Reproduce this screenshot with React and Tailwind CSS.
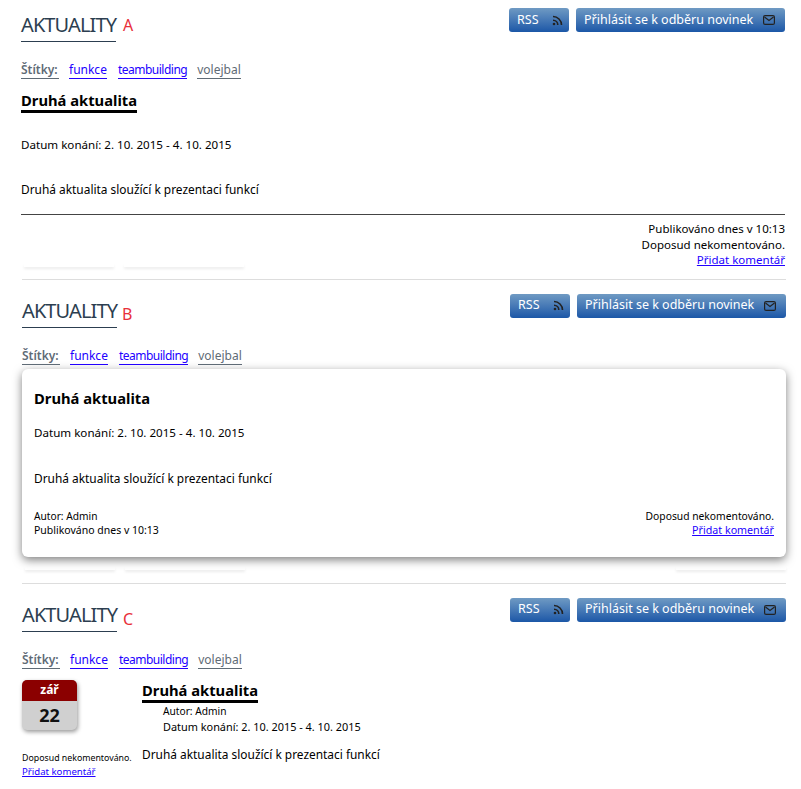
const FONT = "font-['Noto_Sans','DejaVu_Sans',sans-serif]"

function RssIcon() {
  return (
    <svg width="11" height="11" viewBox="0 0 11 11" fill="none" stroke="#222" strokeWidth="1.6" className="shrink-0">
      <circle cx="2" cy="9" r="1.3" fill="#222" stroke="none" />
      <path d="M1 5.2a4.8 4.8 0 0 1 4.8 4.8" />
      <path d="M1 1.5a8.5 8.5 0 0 1 8.5 8.5" />
    </svg>
  )
}

function MailIcon() {
  return (
    <svg width="12" height="10" viewBox="0 0 12 10" fill="none" stroke="#222" strokeWidth="1.2" className="shrink-0">
      <rect x="0.6" y="0.6" width="10.8" height="8.8" rx="1.5" />
      <path d="M1.5 2l4.5 3.5L10.5 2" />
    </svg>
  )
}

function Header({ letter, letterClass }) {
  return (
    <div className="flex items-start justify-between">
      <div className="flex items-start">
        <h2 className="h-[34px] w-[95px] border-b border-[#2c3e50] pt-[3px] text-[20px] leading-[27px] tracking-[-0.9px] whitespace-nowrap text-[#2c3e50]">
          AKTUALITY
        </h2>
        <span className={`text-[16px] leading-none text-[#e8303a] ${letterClass}`}>{letter}</span>
      </div>
      <div className="flex gap-[7px]">
        <button type="button" className="flex h-[24px] w-[60px] items-center justify-between rounded-[3px] bg-gradient-to-b from-[#6f9ac3] to-[#1b57a7] pr-[6px] pl-[8px] text-[12.5px] text-white">
          RSS <RssIcon />
        </button>
        <button type="button" className="flex h-[24px] w-[209px] items-center justify-between rounded-[3px] bg-gradient-to-b from-[#6f9ac3] to-[#1b57a7] pr-[10px] pl-[8px] text-[12.5px] whitespace-nowrap text-white">
          Přihlásit se k odběru novinek <MailIcon />
        </button>
      </div>
    </div>
  )
}

function Tags() {
  return (
    <div className="mt-[20px] flex h-[17px] items-center text-[12px] leading-[16px]">
      <span className="w-[38px] border-b border-[#5f6b76] font-semibold whitespace-nowrap text-[#5f6b76]">Štítky:</span>
      <a href="#" className="ml-[10px] border-b border-[#2200ff] text-[#2200ff]">funkce</a>
      <a href="#" className="ml-[11px] border-b border-[#2200ff] tracking-[-0.5px] text-[#2200ff]">teambuilding</a>
      <a href="#" className="ml-[10px] border-b border-[#5f6b76] text-[#5f6b76]">volejbal</a>
    </div>
  )
}

function Ghosts({ right }) {
  return (
    <div className="flex h-[3px] pl-[3px]">
      <div className="h-full w-[90px] shadow-[0_2px_3px_rgba(0,0,0,0.08)]" />
      <div className="ml-[10px] h-full w-[120px] shadow-[0_2px_3px_rgba(0,0,0,0.08)]" />
      {right && <div className="ml-auto h-full w-[110px] shadow-[0_2px_3px_rgba(0,0,0,0.08)]" />}
    </div>
  )
}

function A() {
  return (
    <section className="pl-[21px] pr-[16px] pt-[8px]">
      <Header letter="A" letterClass="mt-[9px] ml-[7px]" />
      <Tags />
      <h3 className="mt-[12px] w-fit border-b-[3px] border-black text-[14.75px] leading-[19px] font-bold text-black">Druhá aktualita</h3>
      <p className="mt-[24px] text-[11.6px] leading-[16px]">Datum konání: 2. 10. 2015 - 4. 10. 2015</p>
      <p className="mt-[28px] text-[11.9px] leading-[16px]">Druhá aktualita sloužící k prezentaci funkcí</p>
      <div className="mt-[17px] border-t border-[#444]" />
      <div className="mt-[6px] flex flex-col items-end text-[11.5px] leading-[15.5px]">
        <span>Publikováno dnes v 10:13</span>
        <span>Doposud nekomentováno.</span>
        <a href="#" className="text-[#2200ff] underline">Přidat komentář</a>
      </div>
      <div className="-mt-[4px]"><Ghosts /></div>
    </section>
  )
}

function B() {
  return (
    <section className="mt-[12px] pl-[22px] pr-[15px]">
      <div className="border-t border-[#ddd] pt-[14px]">
        <Header letter="B" letterClass="mt-[12px] ml-[5px]" />
        <Tags />
        <div className="mt-[4px] h-[188px] rounded-[6px] bg-white px-[12px] pt-[20px] shadow-[0_3px_10px_rgba(0,0,0,0.5)]">
          <h3 className="text-[14.75px] leading-[19px] font-bold">Druhá aktualita</h3>
          <p className="mt-[17px] text-[11.6px] leading-[16px]">Datum konání: 2. 10. 2015 - 4. 10. 2015</p>
          <p className="mt-[29px] text-[11.9px] leading-[16px]">Druhá aktualita sloužící k prezentaci funkcí</p>
          <div className="mt-[23px] flex justify-between text-[10.5px] leading-[14px]">
            <div>
              <div className="text-[10.2px]">Autor: Admin</div>
              <div>Publikováno dnes v 10:13</div>
            </div>
            <div className="flex flex-col items-end">
              <span className="text-[10.3px]">Doposud nekomentováno.</span>
              <a href="#" className="text-[10.7px] text-[#2200ff] underline">Přidat komentář</a>
            </div>
          </div>
        </div>
        <div className="mt-[10px]"><Ghosts right /></div>
      </div>
    </section>
  )
}

function C() {
  return (
    <section className="mt-[13px] pl-[22px] pr-[15px]">
      <div className="border-t border-[#ddd] pt-[14px]">
        <Header letter="C" letterClass="mt-[13px] ml-[6px]" />
        <Tags />
        <div className="mt-[11px] flex">
          <div className="w-[120px] shrink-0">
            <div className="h-[50px] w-[55px] overflow-hidden rounded-[5px] bg-[#d0d0d0] text-center shadow-[1px_2px_4px_rgba(0,0,0,0.4)]">
              <div className="h-[21px] bg-[#8b0000] text-[12px] leading-[20px] font-bold text-white">zář</div>
              <div className="text-[18px] leading-[29px] font-bold text-[#111]">22</div>
            </div>
            <div className="mt-[21px] text-[8.8px] leading-[14px] whitespace-nowrap">
              <div>Doposud nekomentováno.</div>
              <a href="#" className="text-[9.6px] text-[#2200ff] underline">Přidat komentář</a>
            </div>
          </div>
          <div className="pt-[1px]">
            <h3 className="w-fit border-b-[3px] border-black text-[14.75px] leading-[19px] font-bold">Druhá aktualita</h3>
            <div className="pl-[21px] text-[10.2px] leading-[16px]">Autor: Admin</div>
            <div className="pl-[21px] text-[10.9px] leading-[16px]">Datum konání: 2. 10. 2015 - 4. 10. 2015</div>
            <p className="mt-[11px] text-[11.9px] leading-[16px]">Druhá aktualita sloužící k prezentaci funkcí</p>
          </div>
        </div>
      </div>
    </section>
  )
}

export default function App() {
  return (
    <div className={`h-[789px] overflow-hidden bg-white text-black ${FONT}`}>
      <A />
      <B />
      <C />
    </div>
  )
}
